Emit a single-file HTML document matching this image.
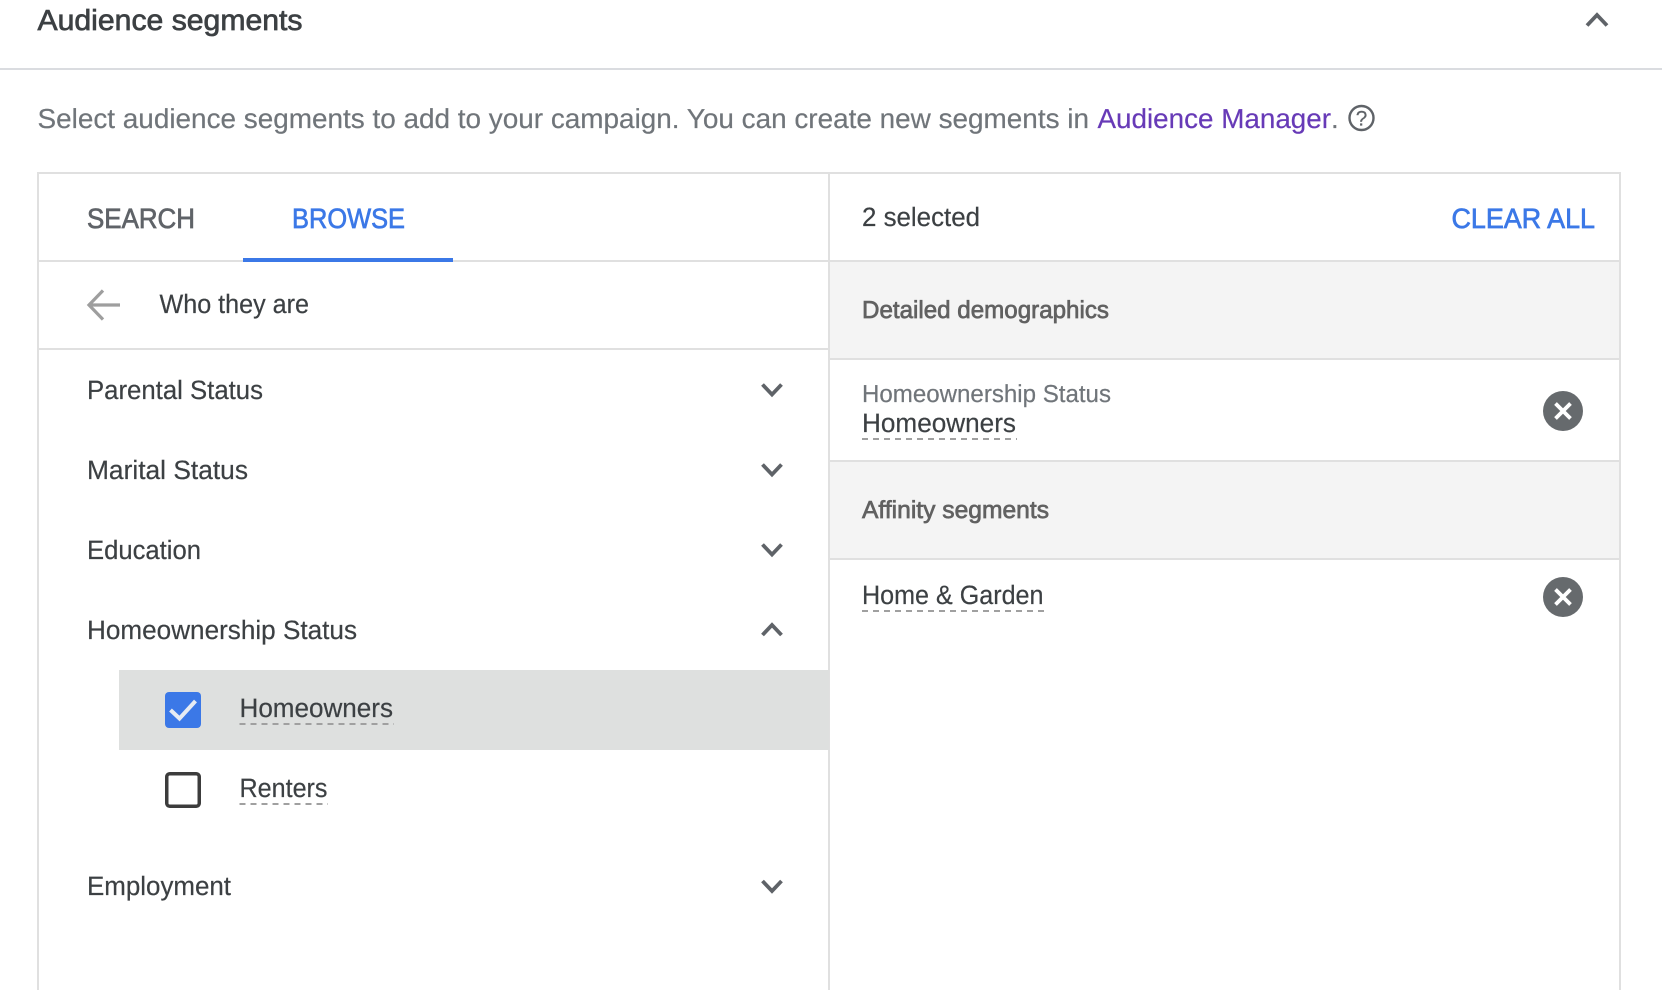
<!DOCTYPE html>
<html lang="en">
<head>
<meta charset="utf-8">
<title>Audience segments</title>
<style>
html,body{margin:0;padding:0;background:#fff;width:1662px;height:990px;overflow:hidden}
svg{display:block}
text{font-family:"Liberation Sans",Arial,sans-serif;text-rendering:geometricPrecision;stroke-width:.2px;stroke:currentColor;paint-order:stroke}
.m{stroke-width:.7px}
.chev{fill:none;stroke:#5f6368;stroke-width:3.8}
.dash{stroke:#a0a0a0;stroke-width:2;stroke-dasharray:6 5}
.ln{fill:#e0e0e0}
</style>
</head>
<body>
<svg width="1662" height="990" viewBox="0 0 1662 990" xmlns="http://www.w3.org/2000/svg">
<rect width="1662" height="990" fill="#fff"/>

<!-- header -->
<text class="m" x="37.5" y="30" font-size="29" fill="#3c4043" color="#3c4043" textLength="265" lengthAdjust="spacingAndGlyphs">Audience segments</text>
<path class="chev" d="M1587 25.5 1597 15 1607 25.5"/>
<rect x="0" y="68" width="1662" height="2" fill="#dadce0"/>

<!-- description -->
<text x="37.5" y="128" font-size="27.5" fill="#70757a" color="#70757a" textLength="1051.5" lengthAdjust="spacingAndGlyphs">Select audience segments to add to your campaign. You can create new segments in</text>
<text x="1097.5" y="128" font-size="27.5" fill="#673ab7" color="#673ab7" textLength="233.5" lengthAdjust="spacingAndGlyphs">Audience Manager</text>
<text x="1331" y="128" font-size="27.5" fill="#70757a" color="#70757a">.</text>
<circle cx="1361.5" cy="118" r="12" fill="none" stroke="#5f6368" stroke-width="2.4"/>
<text x="1361.5" y="125.5" font-size="21" fill="#5f6368" color="#5f6368" text-anchor="middle">?</text>

<!-- grey group bands -->
<rect x="830" y="262" width="789" height="96" fill="#f4f4f4"/>
<rect x="830" y="462" width="789" height="96" fill="#f4f4f4"/>

<!-- panel borders -->
<rect class="ln" x="37" y="172" width="1584" height="2"/>
<rect class="ln" x="37" y="172" width="2" height="818"/>
<rect class="ln" x="1619" y="172" width="2" height="818"/>
<rect class="ln" x="828" y="172" width="2" height="818"/>
<rect class="ln" x="37" y="260" width="1584" height="2"/>
<rect class="ln" x="37" y="348" width="792" height="2"/>
<rect class="ln" x="830" y="358" width="789" height="2"/>
<rect class="ln" x="830" y="460" width="789" height="2"/>
<rect class="ln" x="830" y="558" width="789" height="2"/>

<!-- tabs -->
<text class="m" x="87" y="228" font-size="28" fill="#5f6368" color="#5f6368" textLength="108" lengthAdjust="spacingAndGlyphs">SEARCH</text>
<text class="m" x="292" y="228" font-size="28" fill="#3b78e7" color="#3b78e7" textLength="113" lengthAdjust="spacingAndGlyphs">BROWSE</text>
<rect x="243" y="258" width="210" height="4" fill="#3b78e7"/>

<!-- back row -->
<path d="M120 305H90M103 290.5 89 305 103 319.5" fill="none" stroke="#9e9e9e" stroke-width="3.2"/>
<text x="159.5" y="313" font-size="26.5" fill="#3c4043" color="#3c4043" textLength="149.5" lengthAdjust="spacingAndGlyphs">Who they are</text>

<!-- list -->
<text x="87" y="399" font-size="26.5" fill="#3c4043" color="#3c4043" textLength="176" lengthAdjust="spacingAndGlyphs">Parental Status</text>
<path class="chev" d="M762.5 384.5 772 394.5 781.5 384.5"/>
<text x="87" y="479" font-size="26.5" fill="#3c4043" color="#3c4043" textLength="161" lengthAdjust="spacingAndGlyphs">Marital Status</text>
<path class="chev" d="M762.5 464.5 772 474.5 781.5 464.5"/>
<text x="87" y="559" font-size="26.5" fill="#3c4043" color="#3c4043" textLength="114" lengthAdjust="spacingAndGlyphs">Education</text>
<path class="chev" d="M762.5 544.5 772 554.5 781.5 544.5"/>
<text x="87" y="639" font-size="26.5" fill="#3c4043" color="#3c4043" textLength="270" lengthAdjust="spacingAndGlyphs">Homeownership Status</text>
<path class="chev" d="M762.5 635 772 625 781.5 635"/>

<rect x="119" y="670" width="710" height="80" fill="#dee0df"/>
<rect x="165" y="692" width="36" height="36" rx="4" fill="#3b78e7"/>
<path d="M170.5 710 179.5 718.5 195.5 701" fill="none" stroke="#e6ebf3" stroke-width="4"/>
<text x="239.5" y="717" font-size="26.5" fill="#3c4043" color="#3c4043" textLength="153.5" lengthAdjust="spacingAndGlyphs">Homeowners</text>
<line class="dash" x1="239.5" y1="724" x2="394" y2="724"/>

<rect x="166.75" y="773.75" width="32.5" height="32.5" rx="3" fill="none" stroke="#3c3c3c" stroke-width="3.5"/>
<text x="239.5" y="797" font-size="26.5" fill="#3c4043" color="#3c4043" textLength="88" lengthAdjust="spacingAndGlyphs">Renters</text>
<line class="dash" x1="239.5" y1="804" x2="328" y2="804"/>

<text x="87" y="895" font-size="26.5" fill="#3c4043" color="#3c4043" textLength="144" lengthAdjust="spacingAndGlyphs">Employment</text>
<path class="chev" d="M762.5 881 772 891 781.5 881"/>

<!-- right panel -->
<text x="862" y="226" font-size="26.5" fill="#3c4043" color="#3c4043" textLength="118" lengthAdjust="spacingAndGlyphs">2 selected</text>
<text class="m" x="1451.5" y="228" font-size="28" fill="#3b78e7" color="#3b78e7" textLength="143.5" lengthAdjust="spacingAndGlyphs">CLEAR ALL</text>

<text class="m" x="862" y="318" font-size="24.5" fill="#616161" color="#616161" textLength="247" lengthAdjust="spacingAndGlyphs">Detailed demographics</text>

<text x="862" y="402" font-size="24.5" fill="#70757a" color="#70757a" textLength="249" lengthAdjust="spacingAndGlyphs">Homeownership Status</text>
<text x="862" y="432" font-size="26.5" fill="#3c4043" color="#3c4043" textLength="154" lengthAdjust="spacingAndGlyphs">Homeowners</text>
<line class="dash" x1="862" y1="439" x2="1017" y2="439"/>
<circle cx="1563" cy="411" r="20" fill="#666a6d"/>
<path d="M1555.5 403.5 1570.5 418.5M1570.5 403.5 1555.5 418.5" stroke="#fff" stroke-width="3.8" fill="none"/>

<text class="m" x="862" y="518" font-size="24.5" fill="#616161" color="#616161" textLength="187" lengthAdjust="spacingAndGlyphs">Affinity segments</text>

<text x="862" y="604" font-size="26.5" fill="#3c4043" color="#3c4043" textLength="181.5" lengthAdjust="spacingAndGlyphs">Home &amp; Garden</text>
<line class="dash" x1="862" y1="611" x2="1044" y2="611"/>
<circle cx="1563" cy="597" r="20" fill="#666a6d"/>
<path d="M1555.5 589.5 1570.5 604.5M1570.5 589.5 1555.5 604.5" stroke="#fff" stroke-width="3.8" fill="none"/>
</svg>
</body>
</html>
